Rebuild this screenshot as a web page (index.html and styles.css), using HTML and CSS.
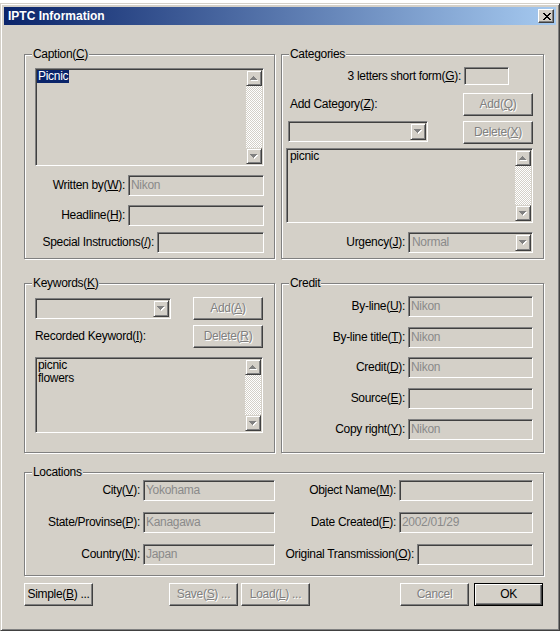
FILE: index.html
```html
<!DOCTYPE html>
<html lang="en">
<head>
<meta charset="utf-8">
<title>IPTC Information</title>
<link rel="stylesheet" href="styles.css">
</head>
<body>
<div class="window">
  <div class="titlebar">
    <span class="title">IPTC Information</span>
    <span class="close"><svg width="8" height="7" viewBox="0 0 8 7"><path d="M0 0h2v1H0zM6 0h2v1H6zM1 1h2v1H1zM5 1h2v1H5zM2 2h4v1H2zM3 3h2v1H3zM2 4h4v1H2zM1 5h2v1H1zM5 5h2v1H5zM0 6h2v1H0zM6 6h2v1H6z" fill="#000"/></svg></span>
  </div>
  <div class="content">
    <div class="groups">
      <div class="group caption">
        <span class="legend">Caption(<u>C</u>)</span>
        <div class="sunken listbox cap-text">
          <div class="lb-items"><span class="sel">Picnic</span></div>
          <div class="scrollbar">
            <span class="sb-btn"><svg width="8" height="5" viewBox="0 0 8 5"><path d="M4 1h1v1h1v1h1v1h1v1H1V4h1V3h1V2h1z" fill="#fff"/><path d="M3 0h1v1h1v1h1v1h1v1H0V3h1V2h1V1h1z" fill="#808080"/></svg></span>
            <span class="sb-track"></span>
            <span class="sb-btn"><svg width="8" height="5" viewBox="0 0 8 5"><path d="M1 1h7v1h-1v1h-1v1h-1v1h-1V4H3V3H2V2H1z" fill="#fff"/><path d="M0 0h7v1H6v1H5v1H4v1H3V3H2V2H1V1H0z" fill="#808080"/></svg></span>
          </div>
        </div>
        <div class="frow r1"><label>Written by(<u>W</u>):</label><div class="sunken field w136">Nikon</div></div>
        <div class="frow r2"><label>Headline(<u>H</u>):</label><div class="sunken field w136"></div></div>
        <div class="frow r3"><label>Special Instructions(<u>/</u>):</label><div class="sunken field w107"></div></div>
      </div>

      <div class="group categories">
        <span class="legend">Categories</span>
        <div class="frow cat-r1"><label>3 letters short form(<u>G</u>):</label><div class="sunken field w45 h18"></div></div>
        <div class="cat-r2"><label class="addcat">Add Category(<u>Z</u>):</label><span class="btn disabled w70">Add(<u>Q</u>)</span></div>
        <div class="cat-r3">
          <div class="sunken combo w140">
            <span class="combo-val"></span>
            <span class="combo-btn"><svg width="8" height="5" viewBox="0 0 8 5"><path d="M1 1h7v1h-1v1h-1v1h-1v1h-1V4H3V3H2V2H1z" fill="#fff"/><path d="M0 0h7v1H6v1H5v1H4v1H3V3H2V2H1V1H0z" fill="#808080"/></svg></span>
          </div>
          <span class="btn disabled w70">Delete(<u>X</u>)</span>
        </div>
        <div class="sunken listbox cat-list">
          <div class="lb-items"><div>picnic</div></div>
          <div class="scrollbar">
            <span class="sb-btn"><svg width="8" height="5" viewBox="0 0 8 5"><path d="M4 1h1v1h1v1h1v1h1v1H1V4h1V3h1V2h1z" fill="#fff"/><path d="M3 0h1v1h1v1h1v1h1v1H0V3h1V2h1V1h1z" fill="#808080"/></svg></span>
            <span class="sb-track"></span>
            <span class="sb-btn"><svg width="8" height="5" viewBox="0 0 8 5"><path d="M1 1h7v1h-1v1h-1v1h-1v1h-1V4H3V3H2V2H1z" fill="#fff"/><path d="M0 0h7v1H6v1H5v1H4v1H3V3H2V2H1V1H0z" fill="#808080"/></svg></span>
          </div>
        </div>
        <div class="frow cat-r4"><label>Urgency(<u>J</u>):</label>
          <div class="sunken combo w125">
            <span class="combo-val">Normal</span>
            <span class="combo-btn"><svg width="8" height="5" viewBox="0 0 8 5"><path d="M1 1h7v1h-1v1h-1v1h-1v1h-1V4H3V3H2V2H1z" fill="#fff"/><path d="M0 0h7v1H6v1H5v1H4v1H3V3H2V2H1V1H0z" fill="#808080"/></svg></span>
          </div>
        </div>
      </div>

      <div class="group keywords">
        <span class="legend">Keywords(<u>K</u>)</span>
        <div class="kw-r1">
          <div class="sunken combo w136">
            <span class="combo-val"></span>
            <span class="combo-btn"><svg width="8" height="5" viewBox="0 0 8 5"><path d="M1 1h7v1h-1v1h-1v1h-1v1h-1V4H3V3H2V2H1z" fill="#fff"/><path d="M0 0h7v1H6v1H5v1H4v1H3V3H2V2H1V1H0z" fill="#808080"/></svg></span>
          </div>
          <span class="btn disabled w70">Add(<u>A</u>)</span>
        </div>
        <div class="kw-r2"><label>Recorded Keyword(<u>I</u>):</label><span class="btn disabled w70">Delete(<u>R</u>)</span></div>
        <div class="sunken listbox kw-list">
          <div class="lb-items"><div>picnic</div><div>flowers</div></div>
          <div class="scrollbar">
            <span class="sb-btn"><svg width="8" height="5" viewBox="0 0 8 5"><path d="M4 1h1v1h1v1h1v1h1v1H1V4h1V3h1V2h1z" fill="#fff"/><path d="M3 0h1v1h1v1h1v1h1v1H0V3h1V2h1V1h1z" fill="#808080"/></svg></span>
            <span class="sb-track"></span>
            <span class="sb-btn"><svg width="8" height="5" viewBox="0 0 8 5"><path d="M1 1h7v1h-1v1h-1v1h-1v1h-1V4H3V3H2V2H1z" fill="#fff"/><path d="M0 0h7v1H6v1H5v1H4v1H3V3H2V2H1V1H0z" fill="#808080"/></svg></span>
          </div>
        </div>
      </div>

      <div class="group credit">
        <span class="legend">Credit</span>
        <div class="frow"><label>By-line(<u>U</u>):</label><div class="sunken field w125">Nikon</div></div>
        <div class="frow m10"><label>By-line title(<u>T</u>):</label><div class="sunken field w125">Nikon</div></div>
        <div class="frow m9"><label>Credit(<u>D</u>):</label><div class="sunken field w125">Nikon</div></div>
        <div class="frow m10"><label>Source(<u>E</u>):</label><div class="sunken field w125"></div></div>
        <div class="frow m10"><label>Copy right(<u>Y</u>):</label><div class="sunken field w125">Nikon</div></div>
      </div>
    </div>

    <div class="group locations">
      <span class="legend">Locations</span>
      <div class="frow"><label>City(<u>V</u>):</label><div class="sunken field w132">Yokohama</div></div>
      <div class="frow"><label>Object Name(<u>M</u>):</label><div class="sunken field w134"></div></div>
      <div class="frow"><label>State/Provinse(<u>P</u>):</label><div class="sunken field w132">Kanagawa</div></div>
      <div class="frow"><label>Date Created(<u>F</u>):</label><div class="sunken field w134">2002/01/29</div></div>
      <div class="frow"><label>Country(<u>N</u>):</label><div class="sunken field w132">Japan</div></div>
      <div class="frow"><label>Original Transmission(<u>O</u>):</label><div class="sunken field w116"></div></div>
    </div>

    <div class="buttons">
      <span class="btn w69">Simple(<u>B</u>) ...</span>
      <span class="btn disabled w69 save">Save(<u>S</u>) ...</span>
      <span class="btn disabled w69 load">Load(<u>L</u>) ...</span>
      <span class="btn disabled w69 cancel">Cancel</span>
      <span class="btn default w69 ok">OK</span>
    </div>
  </div>
</div>
</body>
</html>
```

FILE: styles.css
```css
* { box-sizing: border-box; }
html, body { margin: 0; padding: 0; background: #ffffff; }
body {
  font-family: "Liberation Sans", Arial, sans-serif;
  font-size: 12px;
  letter-spacing: -0.3px;
  line-height: 15px;
  color: #000;
}
u { text-decoration: underline; text-underline-offset: 1px; }

.window {
  width: 560px;
  height: 628px;
  margin-top: 3px;
  background: #d4d0c8;
  border: 1px solid;
  border-color: #d4d0c8 #404040 #404040 #d4d0c8;
  box-shadow: inset 1px 1px #fff, inset -1px -1px #808080;
  padding: 3px;
  display: flex;
  flex-direction: column;
}

.titlebar {
  flex: none;
  height: 18px;
  background: linear-gradient(to right, #0a246a, #a6caf0);
  display: flex;
  align-items: center;
  justify-content: space-between;
  padding: 0 2px 0 4px;
}
.title {
  color: #fff;
  font: bold 12px "Liberation Sans", Arial, sans-serif;
  letter-spacing: 0;
}
.close {
  width: 16px;
  height: 14px;
  background: #d4d0c8;
  border: 1px solid;
  border-color: #fff #404040 #404040 #fff;
  box-shadow: inset -1px -1px #808080;
  display: flex;
  align-items: center;
  justify-content: center;
  padding-left: 1px;
}
.close svg { display: block; }

.content { padding: 29px 0 0 20px; }

.groups {
  display: grid;
  grid-template-columns: 251px 263px;
  grid-template-rows: 205px 170px;
  column-gap: 6px;
  row-gap: 24px;
}

.group {
  position: relative;
  border: 1px solid #808080;
  box-shadow: inset 1px 1px #fff, 1px 1px #fff;
}
.legend {
  position: absolute;
  top: -8px;
  left: 7px;
  padding: 0 1px;
  background: #d4d0c8;
  line-height: 15px;
  white-space: nowrap;
}

/* 3D widgets */
.sunken {
  border: 1px solid;
  border-color: #808080 #fff #fff #808080;
  box-shadow: inset 1px 1px #404040, inset -1px -1px #d4d0c8;
  padding: 1px;
  background: #d4d0c8;
}
.field {
  height: 21px;
  padding: 1px 2px;
  line-height: 17px;
  color: #8a8a8a;
  white-space: nowrap;
  overflow: hidden;
}
.h18 { height: 18px; }
.w45 { width: 45px; }
.w69 { width: 69px; }
.w70 { width: 70px; }
.w107 { width: 107px; }
.w116 { width: 116px; }
.w125 { width: 125px; }
.w132 { width: 132px; }
.w134 { width: 134px; }
.w136 { width: 136px; }
.w140 { width: 140px; }

.btn {
  display: flex;
  align-items: center;
  justify-content: center;
  height: 23px;
  background: #d4d0c8;
  border: 1px solid;
  border-color: #fff #404040 #404040 #fff;
  box-shadow: inset -1px -1px #808080;
  white-space: nowrap;
  padding-bottom: 1px;
}
.btn.disabled { color: #808080; text-shadow: 1px 1px 0 #fff; }
.btn.default {
  border-color: #000;
  box-shadow: inset 1px 1px #fff, inset -1px -1px #404040, inset -2px -2px #808080;
}

.combo {
  display: flex;
  height: 21px;
}
.combo-val {
  flex: 1;
  padding-left: 2px;
  line-height: 17px;
  color: #8a8a8a;
  white-space: nowrap;
  overflow: hidden;
}
.combo-btn, .sb-btn {
  flex: none;
  width: 16px;
  background: #d4d0c8;
  border: 1px solid;
  border-color: #d4d0c8 #404040 #404040 #d4d0c8;
  box-shadow: inset 1px 1px #fff, inset -1px -1px #808080;
  display: flex;
  align-items: center;
  justify-content: center;
}
.combo-btn svg, .sb-btn svg { display: block; }

.listbox { display: flex; }
.lb-items {
  flex: 1;
  padding: 0 1px;
  line-height: 13px;
  overflow: hidden;
}
.sel { background: #0a246a; color: #fff; padding: 0 1px; margin-left: -1px; }
.scrollbar {
  flex: none;
  width: 16px;
  display: flex;
  flex-direction: column;
}
.sb-btn { height: 16px; }
.sb-track {
  flex: 1;
  background: repeating-conic-gradient(#ffffff 0 25%, #d4d0c8 0 50%) 0 0 / 2px 2px;
}

.frow {
  display: flex;
  justify-content: flex-end;
  align-items: center;
  gap: 3px;
}
label { white-space: nowrap; }

/* Caption */
.caption { padding: 13px 10px 0 10px; }
.cap-text { height: 98px; }
.caption .r1 { margin-top: 9px; }
.caption .r2 { margin-top: 9px; }
.caption .r3 { margin-top: 6px; }

/* Categories */
.categories { padding: 12px 10px 0 4px; }
.cat-r1 { padding-right: 24px; }
.cat-r2 {
  display: flex;
  justify-content: space-between;
  align-items: center;
  margin-top: 8px;
}
.addcat { margin-left: 4px; }
.cat-r3 {
  display: flex;
  justify-content: space-between;
  align-items: flex-start;
  margin-top: 5px;
}
.cat-r3 .combo { margin-left: 2px; }
.cat-list { height: 75px; margin-top: 4px; }
.cat-list .lb-items { padding-left: 2px; }
.cat-r4 { margin-top: 9px; }

/* Keywords */
.keywords { padding: 13px 11px 0 10px; }
.kw-r1, .kw-r2 {
  display: flex;
  justify-content: space-between;
  align-items: center;
}
.kw-r2 { margin-top: 5px; }
.kw-list { height: 76px; margin-top: 9px; }

/* Credit */
.credit { padding: 12px 10px 0 0; }
.m9 { margin-top: 9px; }
.m10 { margin-top: 10px; }

/* Locations */
.locations {
  width: 520px;
  height: 104px;
  margin-top: 19px;
  padding: 7px 10px 0 0;
  display: grid;
  grid-template-columns: 250px 1fr;
  grid-auto-rows: 21px;
  row-gap: 11px;
}

/* Bottom buttons */
.buttons {
  display: flex;
  width: 519px;
  margin-top: 7px;
}
.save { margin-left: 76px; }
.load { margin-left: 3px; }
.cancel { margin-left: auto; }
.ok { margin-left: 5px; }
```
